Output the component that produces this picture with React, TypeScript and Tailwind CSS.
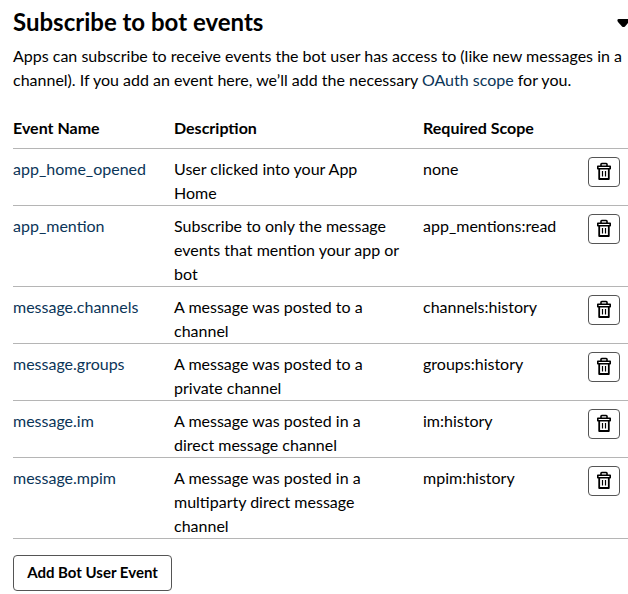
const rows: { h: string; name: string; lines: string[]; scope: string }[] = [
  { h: "h-[57px]", name: "app_home_opened", lines: ["User clicked into your App", "Home"], scope: "none" },
  { h: "h-[81px]", name: "app_mention", lines: ["Subscribe to only the message", "events that mention your app or", "bot"], scope: "app_mentions:read" },
  { h: "h-[57px]", name: "message.channels", lines: ["A message was posted to a", "channel"], scope: "channels:history" },
  { h: "h-[57px]", name: "message.groups", lines: ["A message was posted to a", "private channel"], scope: "groups:history" },
  { h: "h-[57px]", name: "message.im", lines: ["A message was posted in a", "direct message channel"], scope: "im:history" },
  { h: "h-[81px]", name: "message.mpim", lines: ["A message was posted in a", "multiparty direct message", "channel"], scope: "mpim:history" },
];

function Trash() {
  return (
    <svg className="-mt-[2px]" width="14" height="18" viewBox="0 0 14 18" fill="none" stroke="#000" strokeLinejoin="round">
      <path d="M4 4V2.3q0-.8.8-.8h4.4q.8 0 .8.8V4" strokeWidth="1.6" />
      <path d="M.8 4.2h12.4v2.6H.8z" strokeWidth="1.6" />
      <path d="M2.2 7V17h9.6V7" strokeWidth="1.8" />
      <path d="M5.5 9v5.5M8.5 9v5.5" strokeWidth="1.2" />
    </svg>
  );
}

export default function App() {
  return (
    <div className="h-[594px] w-[628px] overflow-hidden bg-white pl-[13px] font-['Lato',sans-serif] text-[16px] leading-6 text-black">
      <div className="flex h-[44px] items-start justify-between pt-[7px]">
        <h2 className="text-[24px] font-bold leading-[30px] whitespace-nowrap">Subscribe to bot events</h2>
        <svg className="mt-[11px]" width="11" height="10" viewBox="0 0 11 10"><path d="M1.5 1H11v4L8 8.4Q6.5 9.8 5 8.4L1 4Q-.5 1.7 1.5 1z" fill="#000" /></svg>
      </div>
      <p className="h-[60px] whitespace-nowrap">
        Apps can subscribe to receive events the bot user has access to (like new messages in a<br />
        channel). If you add an event here, we’ll add the necessary <a className="text-[#0b3558]">OAuth scope</a> for you.
      </p>
      <div className="grid h-[45px] grid-cols-[161px_249px_1fr] border-b border-[#b5b5b5] pt-[12px] font-bold">
        <span>Event Name</span><span>Description</span><span>Required Scope</span>
      </div>
      {rows.map((r) => (
        <div key={r.name} className={`${r.h} grid grid-cols-[161px_249px_165px_32px] border-b border-[#b5b5b5] pt-[8px] whitespace-nowrap`}>
          <a className="text-[#0b3558]">{r.name}</a>
          <div>{r.lines.map((l) => <div key={l}>{l}</div>)}</div>
          <span>{r.scope}</span>
          <button className="flex h-[30px] w-8 items-center justify-center rounded-[4px] border border-[#555]"><Trash /></button>
        </div>
      ))}
      <button className="mt-4 h-9 w-[159px] rounded-[4px] border border-[#555] pb-0.5 text-[15px] font-bold">Add Bot User Event</button>
    </div>
  );
}
